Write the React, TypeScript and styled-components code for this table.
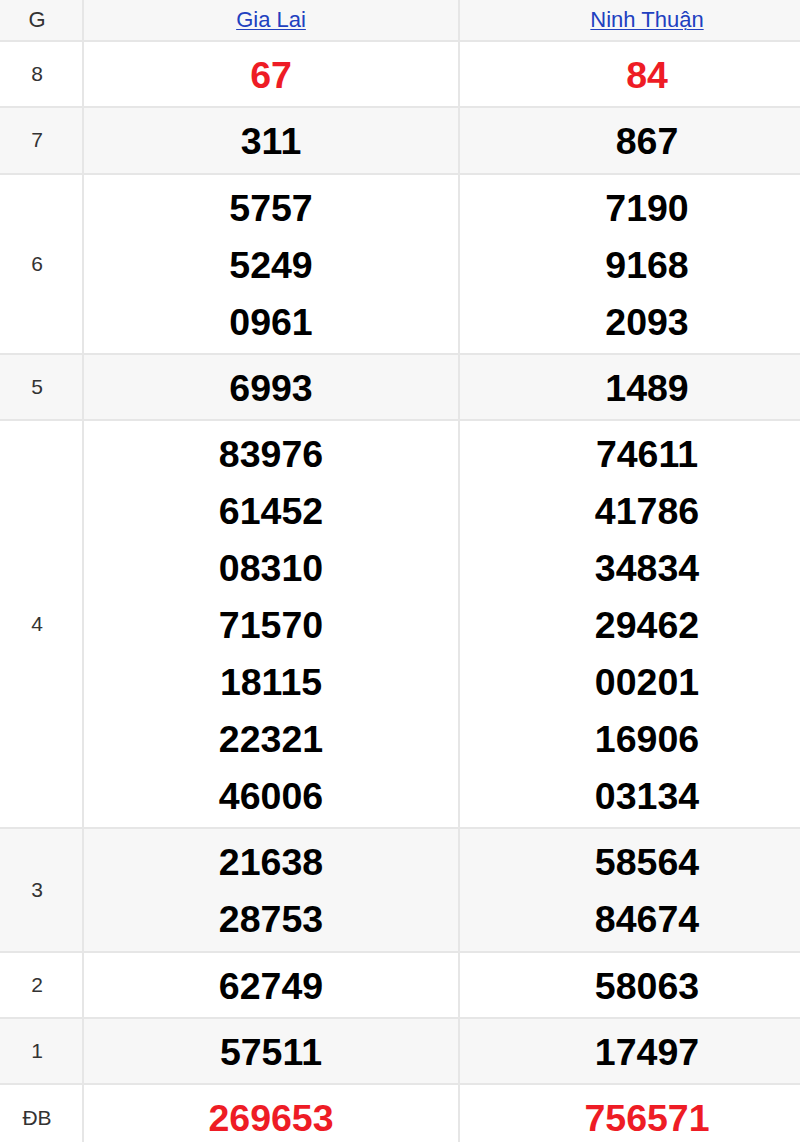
import React from "react";
import styled, { createGlobalStyle } from "styled-components";

const GlobalStyle = createGlobalStyle`
  html, body {
    margin: 0;
    padding: 0;
    background: #ffffff;
    overflow-x: hidden;
  }
  body {
    font-family: "Liberation Sans", Arial, sans-serif;
  }
`;

const Wrapper = styled.div`
  width: 838px;
  margin-left: -8px;
`;

const Table = styled.table`
  width: 100%;
  border-collapse: collapse;
  table-layout: fixed;
  font-family: "Liberation Sans", Arial, sans-serif;
`;

const Row = styled.tr<{ $shaded?: boolean }>`
  background: ${(p) => (p.$shaded ? "#f7f7f7" : "#ffffff")};
`;

const HeadCell = styled.th<{ $w: number; $first?: boolean }>`
  width: ${(p) => p.$w}px;
  height: 40px;
  padding: 0;
  border: 2px solid #e6e6e6;
  border-top: none;
  ${(p) => (p.$first ? "border-left: none;" : "")}
  font-weight: normal;
  font-size: 22px;
  color: #333333;
  text-align: center;
  vertical-align: middle;
`;

const Link = styled.a`
  color: #2140c0;
  text-decoration: underline;
  text-underline-offset: 2px;
  text-decoration-thickness: 1px;
`;

const LabelCell = styled.td`
  padding: 0;
  border: 2px solid #e6e6e6;
  border-left: none;
  font-size: 21px;
  color: #333333;
  text-align: center;
  vertical-align: middle;
`;

const NumCell = styled.td`
  padding: 5px 0 2.3px;
  border: 2px solid #e6e6e6;
  text-align: center;
  vertical-align: middle;
`;

const Num = styled.div<{ $red?: boolean }>`
  height: 57px;
  line-height: 57px;
  font-size: 37.5px;
  font-weight: bold;
  color: ${(p) => (p.$red ? "#ee1c25" : "#000000")};
`;

type Prize = { label: string; a: string[]; b: string[]; red?: boolean };

const prizes: Prize[] = [
  { label: "8", a: ["67"], b: ["84"], red: true },
  { label: "7", a: ["311"], b: ["867"] },
  { label: "6", a: ["5757", "5249", "0961"], b: ["7190", "9168", "2093"] },
  { label: "5", a: ["6993"], b: ["1489"] },
  {
    label: "4",
    a: ["83976", "61452", "08310", "71570", "18115", "22321", "46006"],
    b: ["74611", "41786", "34834", "29462", "00201", "16906", "03134"],
  },
  { label: "3", a: ["21638", "28753"], b: ["58564", "84674"] },
  { label: "2", a: ["62749"], b: ["58063"] },
  { label: "1", a: ["57511"], b: ["17497"] },
  { label: "ĐB", a: ["269653"], b: ["756571"], red: true },
];

export default function App() {
  return (
    <>
      <GlobalStyle />
      <Wrapper>
        <Table>
          <thead>
            <Row $shaded>
              <HeadCell $w={90} $first>
                G
              </HeadCell>
              <HeadCell $w={374}>
                <Link href="#">Gia Lai</Link>
              </HeadCell>
              <HeadCell $w={374}>
                <Link href="#">Ninh Thuận</Link>
              </HeadCell>
            </Row>
          </thead>
          <tbody>
            {prizes.map((p, i) => (
              <Row key={p.label} $shaded={i % 2 === 1}>
                <LabelCell>{p.label}</LabelCell>
                <NumCell>
                  {p.a.map((n, j) => (
                    <Num key={j} $red={p.red}>
                      {n}
                    </Num>
                  ))}
                </NumCell>
                <NumCell>
                  {p.b.map((n, j) => (
                    <Num key={j} $red={p.red}>
                      {n}
                    </Num>
                  ))}
                </NumCell>
              </Row>
            ))}
          </tbody>
        </Table>
      </Wrapper>
    </>
  );
}
